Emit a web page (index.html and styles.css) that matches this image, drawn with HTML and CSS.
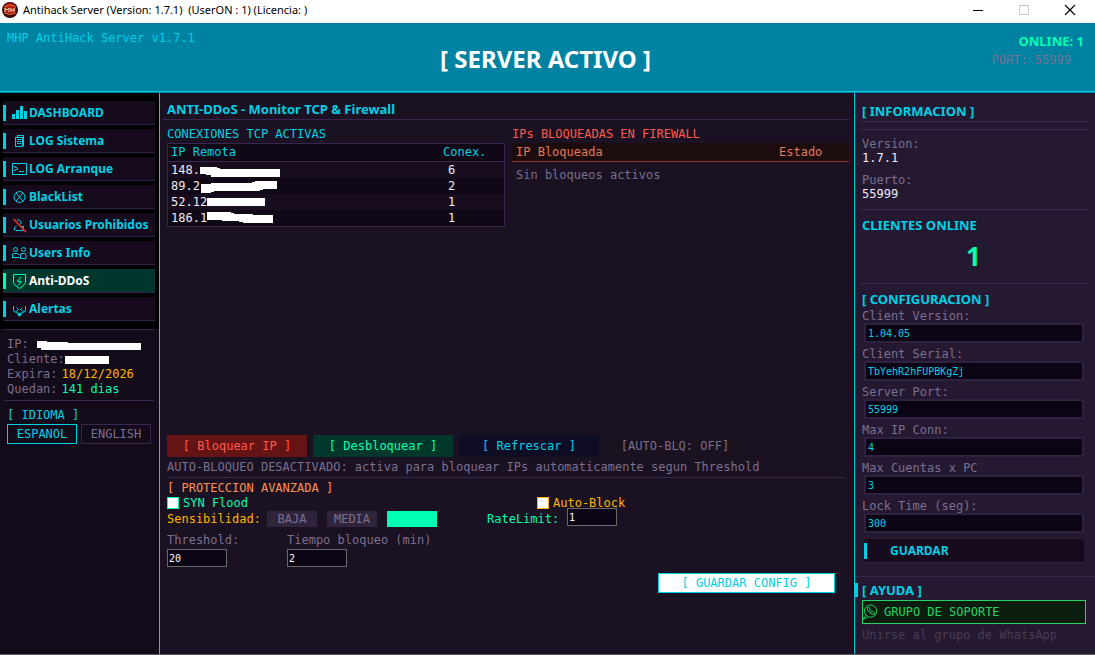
FILE: index.html
```html
<!DOCTYPE html>
<html lang="es">
<head>
<meta charset="utf-8">
<title>Antihack Server</title>
<link rel="stylesheet" href="styles.css">
</head>
<body>
<div class="titlebar">
  <svg class="app-icon smooth" viewBox="0 0 16 16"><circle cx="8" cy="8" r="8" fill="#3a0c0a"/><circle cx="8" cy="7" r="6" fill="#b3200f"/><path d="M2 5q6-4 12 0M2 11q6 3 12 0" stroke="#e8642c" fill="none"/><path d="M3 10V6l2 2 2-2v4M9 6v4M9 8h3M12 6v4" stroke="#f3d9b0" fill="none"/></svg>
  <span class="titlebar-text">Antihack Server (Version: 1.7.1)&nbsp; (UserON : 1) (Licencia: )</span>
  <div class="window-buttons">
    <button type="button" aria-label="Minimizar"><svg viewBox="0 0 12 12"><path d="M1 6.500h10" stroke="#000"/></svg></button>
    <button type="button" aria-label="Maximizar" disabled><svg viewBox="0 0 12 12"><path d="M1.500 1.500h9v9h-9z" stroke="#ccc" fill="none"/></svg></button>
    <button type="button" aria-label="Cerrar"><svg class="smooth" viewBox="0 0 12 12"><path d="M1 1l10 10M11 1L1 11" stroke="#000" stroke-width="1.200"/></svg></button>
  </div>
</div>

<header class="header">
  <span class="product">MHP AntiHack Server v1.7.1</span>
  <h1>[ SERVER ACTIVO ]</h1>
  <div class="header-status">
    <span class="online">ONLINE: 1</span>
    <span class="port">PORT: 55999</span>
  </div>
</header>

<div class="workspace">
  <aside class="sidebar">
    <nav class="nav">
      <button type="button" class="nav-item"><svg viewBox="0 0 16 16"><path d="M0 9h3v5H0zM4 5h3v9H4zM8 1h3v13H8zM12 6h3v8h-3z" fill="currentColor"/></svg>DASHBOARD</button>
      <button type="button" class="nav-item"><svg viewBox="0 0 16 16"><path d="M3.500 4.500h7v9h-7zM5.500 4.500v-2h6v10h-1M5 6.500h4M5 8.500h4M5 10.500h4" stroke="currentColor" fill="none"/></svg>LOG Sistema</button>
      <button type="button" class="nav-item"><svg viewBox="0 0 16 16"><path d="M.5 2.500h14v11H.5zM2.500 5.500l3 2-3 2M7 10.500h5" stroke="currentColor" fill="none"/></svg>LOG Arranque</button>
      <button type="button" class="nav-item"><svg class="smooth" viewBox="0 0 16 16"><circle cx="7.500" cy="8" r="5.500" stroke="currentColor" fill="none"/><path d="M4 4l7 8M11 4l-7 8" stroke="currentColor"/></svg>BlackList</button>
      <button type="button" class="nav-item"><svg class="smooth" viewBox="0 0 16 16"><path d="M5 3.500a2.500 2.500 0 1 1 3 4M2.500 13.500v-3l2-1.500M9 9.500h2.500v4H4" stroke="currentColor" fill="none"/><path d="M1.500 2L14 15" stroke="#e03030" stroke-width="1.800"/></svg>Usuarios Prohibidos</button>
      <button type="button" class="nav-item"><svg class="smooth" viewBox="0 0 16 16"><circle cx="3.500" cy="4.500" r="2" stroke="currentColor" fill="none"/><circle cx="11.500" cy="4.500" r="2" stroke="currentColor" fill="none"/><path d="M.5 12.500V10q0-1.500 1.500-1.500h3q1.500 0 1.500 1.500M8.500 13.500V10q0-1.500 1.500-1.500h2q2 0 2 2v3zM0 12.500h7" stroke="currentColor" fill="none"/></svg>Users Info</button>
      <button type="button" class="nav-item active"><svg class="smooth" viewBox="0 0 16 16"><path d="M1.500 1.500h12v8q-2 4-6 6-4-2-6-6zM9 4L5.500 8.500h4L6 12.500" stroke="currentColor" fill="none"/></svg>Anti-DDoS</button>
      <button type="button" class="nav-item"><svg class="smooth" viewBox="0 0 16 16"><path d="M1.500 5v4q0 2 2 2l3-2.500-2-2M13.500 5v4q0 2-2 2l-3-2.500 2-2M3.500 11.500q4 2 8 0" stroke="currentColor" fill="none"/><path d="M5 13l2.500-1L10 13l-2.500 3z" fill="currentColor"/></svg>Alertas</button>
    </nav>
    <dl class="license">
      <div><dt>IP:</dt><dd class="masked"><svg class="mask-ip" viewBox="0 0 106 12"><path d="M1 2h9l2 1h20v1h73v7H5V9H1z" fill="#fff"/></svg></dd></div>
      <div><dt>Cliente:</dt><dd class="masked"><svg class="mask-client" viewBox="0 0 44 12"><path d="M0 2h44v8H0z" fill="#fff"/></svg></dd></div>
      <div><dt>Expira:</dt><dd class="amber">18/12/2026</dd></div>
      <div><dt>Quedan:</dt><dd class="green">141 dias</dd></div>
    </dl>
    <section class="language">
      <h2>[ IDIOMA ]</h2>
      <div class="language-buttons">
        <button type="button" class="selected">ESPANOL</button>
        <button type="button">ENGLISH</button>
      </div>
    </section>
  </aside>

  <main class="main">
    <h2 class="page-title">ANTI-DDoS - Monitor TCP &amp; Firewall</h2>
    <div class="monitors">
      <section>
        <h3>CONEXIONES TCP ACTIVAS</h3>
        <table class="connections">
          <thead><tr><th>IP Remota</th><th class="count">Conex.</th></tr></thead>
          <tbody>
            <tr><td><span class="address">148.<svg viewBox="0 0 84 12"><path d="M0 3h17v1h3v1h60v8H11v-2H6v-1H0z" fill="#fff"/></svg></span></td><td class="count">6</td></tr>
            <tr><td><span class="address">89.2<svg viewBox="0 0 84 12"><path d="M1 4h10V3h41V2h3V1h22v8H63v1h-3v1H14v1h-3v1H1z" fill="#fff"/></svg></span></td><td class="count">2</td></tr>
            <tr><td><span class="address">52.12<svg viewBox="0 0 84 12"><path d="M0 2h58v8H0z" fill="#fff"/></svg></span></td><td class="count">1</td></tr>
            <tr><td><span class="address">186.1<svg viewBox="0 0 84 12"><path d="M0 0h24v1h3v1h19v1h20v8H36v-1h-4V9H15V8H0z" fill="#fff"/></svg></span></td><td class="count">1</td></tr>
          </tbody>
        </table>
      </section>
      <section>
        <h3 class="red">IPs BLOQUEADAS EN FIREWALL</h3>
        <table class="blocked">
          <thead><tr><th>IP Bloqueada</th><th class="state">Estado</th></tr></thead>
          <tbody><tr><td colspan="2">Sin bloqueos activos</td></tr></tbody>
        </table>
      </section>
    </div>

    <div class="actions">
      <button type="button" class="block">[ Bloquear IP ]</button>
      <button type="button" class="unblock">[ Desbloquear ]</button>
      <button type="button" class="refresh">[ Refrescar ]</button>
      <button type="button" class="auto">[AUTO-BLQ: OFF]</button>
    </div>
    <p class="hint">AUTO-BLOQUEO DESACTIVADO: activa para bloquear IPs automaticamente segun Threshold</p>

    <form class="protection">
      <h3 class="orange">[ PROTECCION AVANZADA ]</h3>
      <div class="checks">
        <label class="green"><input type="checkbox">SYN Flood</label>
        <label class="amber"><input type="checkbox">Auto-Block</label>
      </div>
      <div class="sensitivity">
        <span class="amber sensitivity-label">Sensibilidad:</span>
        <button type="button">BAJA</button>
        <button type="button">MEDIA</button>
        <button type="button" class="chosen" aria-label="ALTA"></button>
        <label class="green rate" for="rate">RateLimit:</label>
        <input id="rate" type="text" value="1">
      </div>
      <div class="limits">
        <label>Threshold:<input type="text" value="20"></label>
        <label>Tiempo bloqueo (min)<input type="text" value="2"></label>
      </div>
      <button type="button" class="save-config">[ GUARDAR CONFIG ]</button>
    </form>
  </main>

  <aside class="details">
    <h2 class="info-title">[ INFORMACION ]</h2>
    <dl class="info">
      <div><dt>Version:</dt><dd>1.7.1</dd></div>
      <div><dt>Puerto:</dt><dd>55999</dd></div>
    </dl>
    <section class="clients">
      <h2>CLIENTES ONLINE</h2>
      <p>1</p>
    </section>
    <form class="config">
      <h2>[ CONFIGURACION ]</h2>
      <label>Client Version:<input type="text" value="1.04.05"></label>
      <label>Client Serial:<input type="text" value="TbYehR2hFUPBKgZj"></label>
      <label>Server Port:<input type="text" value="55999"></label>
      <label>Max IP Conn:<input type="text" value="4"></label>
      <label>Max Cuentas x PC<input type="text" value="3"></label>
      <label>Lock Time (seg):<input type="text" value="300"></label>
      <button type="button" class="save">GUARDAR</button>
    </form>
    <section class="help">
      <h2>[ AYUDA ]</h2>
      <button type="button" class="support"><svg class="smooth" viewBox="0 0 18 18"><circle cx="8" cy="8" r="6.500" stroke="currentColor" fill="none"/><path d="M3 12.500L0 16.500l5-2M4.500 4.500q0 5 7 7.500M4.500 4.500l2-.5 1.500 3-1.500 1M11.500 12l1-2-3-2L8 9.500" stroke="currentColor" fill="none"/></svg>GRUPO DE SOPORTE</button>
      <p>Unirse al grupo de WhatsApp</p>
    </section>
  </aside>
</div>
</body>
</html>
```
FILE: styles.css
```css
:root {
  --cyan: #00d0e4;
  --green: #00ffb0;
  --amber: #ffb400;
  --muted: #7b6f8e;
  --line: #3a2650;
  --field: #0b0414;
  --mono: "DejaVu Sans Mono", "Liberation Mono", monospace;
  --sans: "Noto Sans", "Open Sans", sans-serif;
}

* { box-sizing: border-box; margin: 0; padding: 0; }

body {
  display: flex;
  flex-direction: column;
  min-height: 100vh;
  background: #1a1122;
  color: var(--muted);
  font: 12px/14px var(--mono);
}

button, input { font: inherit; color: inherit; border: 0; border-radius: 0; background: none; }
h1, h2, h3, th { font-size: inherit; font-weight: normal; }
svg { display: block; flex: none; shape-rendering: crispEdges; }
svg.smooth { shape-rendering: auto; }

.green { color: var(--green); }
.amber { color: var(--amber); }
.red { color: #ff5a4a; }
.orange { color: #ff914d; }

/* Window title bar */
.titlebar {
  display: flex;
  align-items: center;
  height: 23px;
  padding: 0 19px 3px 2px;
  gap: 5px;
  background: #fff;
  color: #000;
  font: 11px/16px var(--sans);
}
.app-icon { width: 16px; height: 16px; }
.window-buttons { display: flex; gap: 34px; margin-left: auto; }
.window-buttons svg { width: 12px; height: 12px; }

/* Header */
.header {
  display: grid;
  grid-template-columns: 1fr auto 1fr;
  height: 70px;
  padding: 8px 11px 6px 7px;
  background: #0083a3;
  border-bottom: 1px solid #0083a3;
  box-shadow: inset 0 -1px var(--cyan);
}
.product { color: var(--cyan); }
.header h1 { align-self: center; color: #fff; font: bold 24px/32px var(--sans); }
.header-status { display: flex; flex-direction: column; align-items: flex-end; gap: 4px; padding-top: 2px; }
.online { color: var(--green); font: bold 13px/16px var(--sans); }
.port { padding-right: 13px; }

.workspace {
  flex: 1;
  display: grid;
  grid-template-columns: 160px 1fr 241px;
  border-bottom: 1px solid #5c5a5c;
}

/* Sidebar */
.sidebar { background: #130a1a; border-right: 1px solid var(--cyan); }
.nav {
  display: flex;
  flex-direction: column;
  gap: 4px;
  padding: 8px 4px 8px 3px;
  background: #000;
}
.nav-item {
  display: flex;
  align-items: center;
  height: 24px;
  gap: 1px;
  background: linear-gradient(var(--cyan), var(--cyan)) 0 4px / 3px 16px no-repeat #150b1c;
  border-bottom: 1px solid #33214a;
  padding-left: 9px;
  color: var(--cyan);
  font: bold 12px/16px var(--sans);
  white-space: nowrap;
}
.nav-item svg { width: 16px; height: 16px; }
.nav-item.active {
  background: linear-gradient(var(--green), var(--green)) 0 4px / 3px 16px no-repeat #00372c;
  color: #fff;
}
.nav-item.active svg { color: var(--green); }
.license {
  margin: 0 5px 0 4px;
  padding: 7px 3px 3px;
  border: solid var(--line);
  border-width: 1px 0;
  line-height: 15px;
}
.license div { display: flex; gap: 4px; }
.license .masked { margin-left: -4px; align-self: center; }
.mask-ip { width: 106px; height: 12px; margin-left: 7px; }
.mask-client { width: 44px; height: 12px; }
.language { padding: 7px 8px 0 7px; }
.language h2 { color: var(--cyan); }
.language-buttons { display: flex; gap: 4px; padding-top: 2px; }
.language button { flex: 1; height: 20px; border: 1px solid var(--line); }
.language .selected { border-color: var(--cyan); color: var(--cyan); }

/* Main panel */
.main { display: flex; flex-direction: column; padding: 7px 4px 61px 3px; border-right: 1px solid #000; }
.page-title {
  padding: 0 4px 1px;
  border-bottom: 1px solid var(--line);
  color: var(--cyan);
  font: bold 13px/18px var(--sans);
}
.monitors {
  flex: 1;
  display: grid;
  grid-template-columns: 338px 1fr;
  gap: 7px;
  padding: 7px 0 0 4px;
}
.monitors h3 { padding-bottom: 2px; }
.monitors h3:not(.red) { color: var(--cyan); }
table { width: 100%; border-collapse: separate; border-spacing: 0; }
th, td { height: 16px; padding: 0 4px; text-align: left; line-height: 14px; }
th { height: 19px; padding-bottom: 1px; }
.connections { border: 1px solid var(--line); background: #110817; color: #f0ecf4; }
.connections th { height: 18px; border-bottom: 1px solid var(--line); color: var(--cyan); }
.connections td, .connections th { padding-left: 3px; }
.connections tbody tr:nth-child(odd) { background: #170d1f; }
.connections .count { width: 61px; padding-left: 0; }
.connections td.count { padding-left: 5px; }
.address { display: flex; align-items: center; }
.address svg { width: 84px; height: 12px; overflow: visible; }
.blocked th { background: #1d0c0d; border-bottom: 1px solid #8c3838; color: #e07a58; }
.blocked .state { width: 74px; }
.blocked td { padding-top: 6px; }

.actions { display: flex; gap: 6px; padding-left: 4px; }
.actions button { width: 140px; height: 22px; }
.block { background: #641414; color: #ff5a4a; }
.unblock { background: #00372c; color: var(--green); }
.refresh { background: #0e0d25; color: var(--cyan); }
.auto { background: #1a121f; }
.hint { margin: 0 4px; padding: 3px 0; border-bottom: 1px solid var(--line); }

.protection { display: flex; flex-direction: column; padding: 3px 14px 0 4px; }
.checks { display: grid; grid-template-columns: 370px 1fr; height: 15px; }
.checks label { display: flex; align-items: center; gap: 4px; }
.checks input { appearance: none; width: 12px; height: 12px; background: #fff; border: 1px solid currentColor; }
.sensitivity { display: flex; align-items: center; gap: 10px; height: 16px; margin-top: 1px; }
.sensitivity-label { width: 90px; white-space: nowrap; }
.sensitivity button { width: 50px; height: 16px; background: #30243c; }
.sensitivity .chosen { background: var(--green); }
.rate { width: 70px; margin-left: 40px; white-space: nowrap; }
.protection input[type="text"] {
  display: block;
  width: 60px;
  height: 18px;
  padding: 0 1px;
  background: var(--field);
  border: 1px solid #6a6a6a;
  color: #fff;
  font-size: 10px;
}
.protection .sensitivity input { width: 50px; margin-top: -4px; }
.limits { display: grid; grid-template-columns: 120px 1fr; padding-top: 6px; }
.limits input { margin-top: 2px; }
.save-config {
  align-self: flex-end;
  width: 177px;
  height: 20px;
  margin-top: 6px;
  background: #fff;
  border: 1px solid var(--cyan);
  color: var(--cyan);
}

/* Details panel */
.details { background: #251931; border-left: 1px solid var(--cyan); }
.details h2 { color: var(--cyan); font: bold 13px/16px var(--sans); }
.info-title, .info, .clients { margin: 0 7px 0 4px; padding-left: 3px; border-bottom: 1px solid var(--line); }
.details .info-title { padding-top: 10px; padding-bottom: 2px; }
.info { display: grid; gap: 8px; margin-top: 7px; padding-top: 7px; padding-bottom: 8px; border-top: 1px solid var(--line); }
.info dd { color: #f0ecf4; }
.clients { padding-top: 7px; }
.clients p { padding: 5px 3px 9px 0; color: var(--green); font: bold 26px/36px var(--sans); text-align: center; }
.config { display: flex; flex-direction: column; padding: 7px 11px 13px 7px; border-bottom: 1px solid var(--line); }
.config label { display: block; padding-top: 2px; }
.config label + label { padding-top: 4px; }
.config input {
  display: block;
  width: calc(100% - 2px);
  height: 20px;
  margin-left: 2px;
  padding: 0 2px;
  background: var(--field);
  border: 2px solid #2f2142;
  color: var(--cyan);
  font-size: 10px;
}
.save {
  height: 24px;
  margin: 6px 0 0 2px;
  padding-left: 26px;
  background: linear-gradient(var(--cyan), var(--cyan)) 0 4px / 3px 16px no-repeat #150b1c;
  border-bottom: 1px solid #33214a;
  font: bold 12px/16px var(--sans);
  text-align: left;
}
.config .save { color: var(--cyan); }
.help { padding-top: 6px; }
.details .help h2 { padding-left: 4px; border-left: 3px solid var(--cyan); line-height: 14px; }
.support {
  display: flex;
  align-items: center;
  gap: 4px;
  width: calc(100% - 16px);
  height: 24px;
  margin: 3px 0 4px 7px;
  background: #0b1d0e;
  border: 1px solid #25d366;
  color: #25d366;
}
.support svg { width: 17px; height: 18px; }
.help p { padding-left: 7px; color: #473d55; }
```
